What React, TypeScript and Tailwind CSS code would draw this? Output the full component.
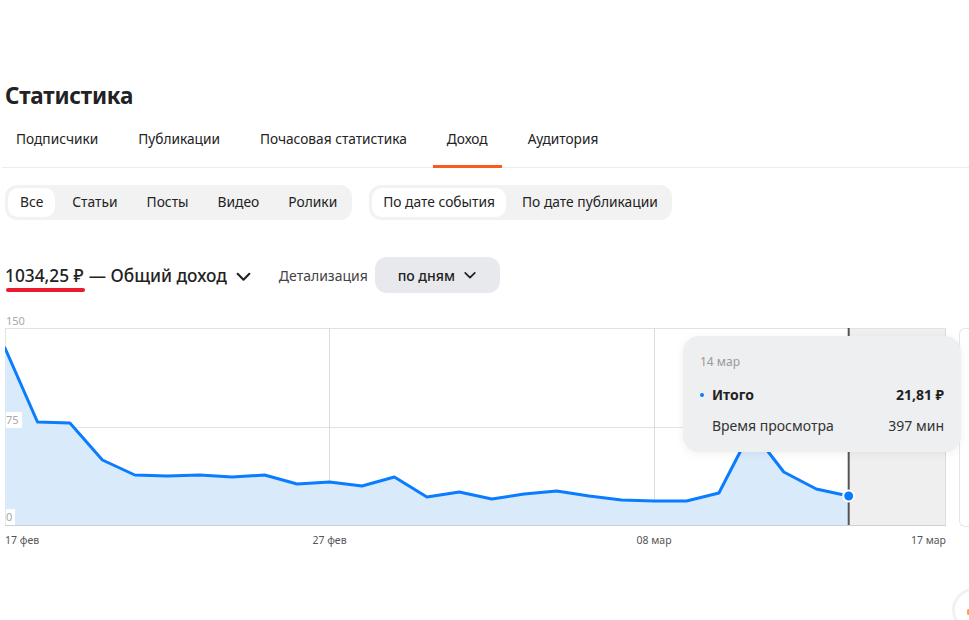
import React from "react";

const FONT = { fontFamily: '"Noto Sans", "Open Sans", Arial, sans-serif' };

const DAY = 32.45;
const ys = [38, 112, 113, 150, 165, 166, 165, 167, 165, 174, 172, 176, 167, 187, 182, 189, 184, 181, 186, 190, 191, 191, 183, 120, 162, 179, 186];

function Chevron({ className }: { className?: string }) {
  return (
    <svg viewBox="0 0 16 16" className={className} fill="none" stroke="currentColor" strokeWidth="2" strokeLinecap="round" strokeLinejoin="round">
      <path d="M2.5 5.5 8 11l5.5-5.5" />
    </svg>
  );
}

function Chart() {
  const pts = ys.map((y, i) => [i * DAY, y] as [number, number]);
  const line = pts.map((p, i) => `${i === 0 ? "M" : "L"}${p[0].toFixed(1)} ${p[1]}`).join(" ");
  const last = pts[pts.length - 1];
  const area = `${line} L${last[0].toFixed(1)} 215 L0 215 Z`;
  return (
    <svg width="946" height="240" className="block" style={FONT}>
      <rect x="843.7" y="18" width="97.3" height="197" fill="#efefef" />
      <line x1="0" y1="18.5" x2="941" y2="18.5" stroke="#e2e2e2" />
      <line x1="0" y1="117.5" x2="941" y2="117.5" stroke="#e2e2e2" />
      <line x1="0.5" y1="18" x2="0.5" y2="215" stroke="#e2e2e2" />
      <line x1="324.5" y1="18" x2="324.5" y2="215" stroke="#dcdcdc" />
      <line x1="649.5" y1="18" x2="649.5" y2="215" stroke="#dcdcdc" />
      <line x1="940.5" y1="18" x2="940.5" y2="215" stroke="#dcdcdc" />
      <path d={area} fill="#d9eafb" />
      <line x1="0" y1="215.5" x2="941" y2="215.5" stroke="#cfcfcf" />
      <line x1="843.7" y1="18" x2="843.7" y2="215" stroke="#555" strokeWidth="2" />
      <path d={line} fill="none" stroke="#0a7cff" strokeWidth="3" strokeLinejoin="round" strokeLinecap="round" />
      <circle cx={last[0]} cy={last[1]} r="5.5" fill="#0a7cff" stroke="#fff" strokeWidth="2" />
      <rect x="1" y="102" width="16" height="16" fill="#fff" />
      <rect x="1" y="199" width="9" height="16" fill="#fff" />
      <g fontSize="11" fill="#a8a8a8">
        <text x="1" y="15">150</text>
        <text x="1" y="114">75</text>
        <text x="1" y="211">0</text>
      </g>
      <g fontSize="10.5" fill="#555">
        <text x="0" y="234">17 фев</text>
        <text x="324.5" y="234" textAnchor="middle">27 фев</text>
        <text x="649" y="234" textAnchor="middle">08 мар</text>
        <text x="941" y="234" textAnchor="end">17 мар</text>
      </g>
    </svg>
  );
}

export default function App() {
  const tabs = ["Подписчики", "Публикации", "Почасовая статистика", "Доход", "Аудитория"];
  const types = ["Все", "Статьи", "Посты", "Видео", "Ролики"];
  return (
    <div className="relative w-[969px] h-[620px] overflow-hidden bg-white text-[#222]" style={FONT}>
      <div className="pl-[5px] pt-[81px]">
        <h1 className="text-[22.4px] font-bold leading-[30px] tracking-[-0.2px]">Статистика</h1>
        <div className="flex h-[57px] border-b border-[#ececec] ml-[-3px] gap-[12px]">
          {tabs.map((t) => (
            <div key={t} className="relative flex items-center px-[14px] text-[13.7px] text-[#222]">
              {t}
              {t === "Доход" && <div className="absolute left-0 right-0 bottom-[-1px] h-[3px] bg-[#fa5a1d]" />}
            </div>
          ))}
        </div>
        <div className="flex gap-[17px] mt-[17px]">
          <div className="flex h-[35px] p-[3px] gap-[5px] rounded-[12px] bg-[#f2f2f2]">
            {types.map((t, i) => (
              <div
                key={t}
                className={`flex items-center px-[12px] rounded-[10px] text-[13.8px] font-[450] ${i === 0 ? "bg-white" : ""}`}
              >
                {t}
              </div>
            ))}
          </div>
          <div className="flex h-[35px] p-[3px] gap-[5px] rounded-[12px] bg-[#f2f2f2]">
            <div className="flex items-center px-[11px] rounded-[10px] text-[13.8px] font-[450] bg-white">По дате события</div>
            <div className="flex items-center px-[11px] rounded-[10px] text-[13.8px] font-[450]">По дате публикации</div>
          </div>
        </div>
        <div className="flex items-center mt-[37px] h-[36px]">
          <div className="flex items-center text-[17.3px] font-medium pt-[2px]">
            <span className="relative">
              1034,25 ₽
              <span className="absolute left-[1px] right-[-1px] top-[25px] h-[4px] rounded-full bg-[#ea1b2c]" />
            </span>
            <span className="ml-[5px]">— Общий доход</span>
            <Chevron className="w-[17px] h-[17px] ml-[8px] text-[#222]" />
          </div>
          <div className="ml-[27px] text-[14px] text-[#444]">Детализация</div>
          <div className="ml-[7px] flex items-center h-[36px] w-[125px] justify-center gap-[8px] rounded-[12px] bg-[#e8e9ed] text-[14px] font-medium">
            по дням
            <Chevron className="w-[14px] h-[14px]" />
          </div>
        </div>
        <div className="flex mt-[17px]">
          <div className="relative w-[946px] shrink-0">
            <Chart />
            <div className="absolute left-[678px] top-[26px] w-[278px] h-[116px] rounded-[16px] bg-[#eeeff1] shadow-[0_2px_10px_rgba(0,0,0,0.06)] px-[17px] pt-[17px]">
              <div className="text-[12px] text-[#999] leading-[18px]">14 мар</div>
              <div className="flex items-center justify-between mt-[13px] text-[14px] font-bold">
                <div className="flex items-center">
                  <span className="w-[4px] h-[4px] rounded-full bg-[#0a7cff] mr-[8px]" />
                  Итого
                </div>
                <span>21,81 ₽</span>
              </div>
              <div className="flex items-center justify-between mt-[10px] text-[14px] text-[#333] pl-[12px]">
                <span>Время просмотра</span>
                <span>397 мин</span>
              </div>
            </div>
          </div>
          <div className="ml-[8px] mt-[18px] w-[40px] h-[199px] shrink-0 rounded-l-[6px] border border-r-0 border-[#e6e6e6]" />
        </div>
      </div>
      <div className="absolute left-[952px] top-[588px] w-[44px] h-[44px] rounded-full border-[3px] border-[#f1f1f1] bg-white">
        <div className="absolute left-[12px] top-[18px] w-[3px] h-[6px] rounded-full bg-[#f7a348]" />
      </div>
    </div>
  );
}
